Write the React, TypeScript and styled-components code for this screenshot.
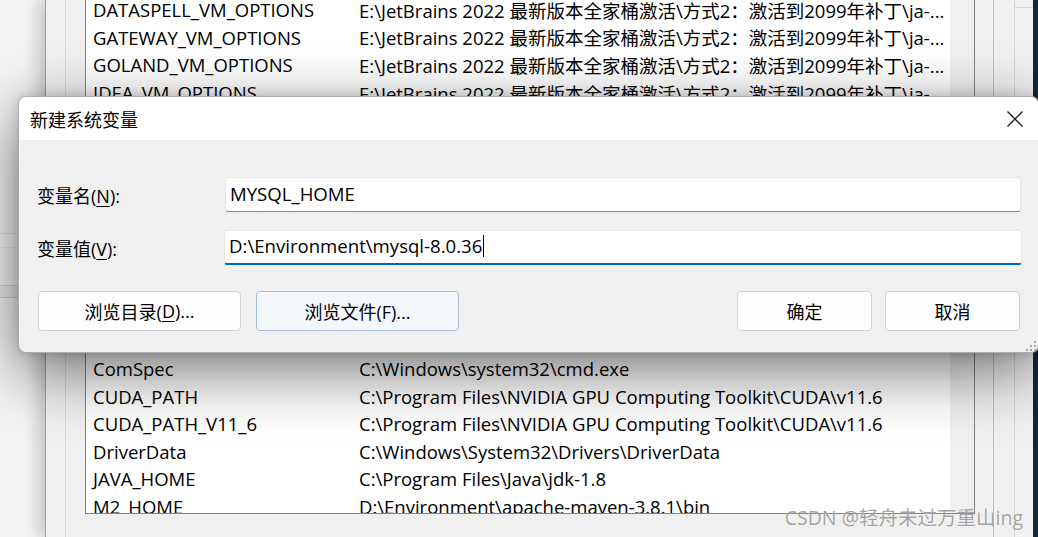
import React from 'react';
import styled, { createGlobalStyle } from 'styled-components';

const ROW_H = 27.6;

interface EnvVar {
  name: string;
  value: string;
}

const topRows: EnvVar[] = [
  { name: 'DATASPELL_VM_OPTIONS', value: 'E:\\JetBrains 2022 最新版本全家桶激活\\方式2：激活到2099年补丁\\ja-...' },
  { name: 'GATEWAY_VM_OPTIONS', value: 'E:\\JetBrains 2022 最新版本全家桶激活\\方式2：激活到2099年补丁\\ja-...' },
  { name: 'GOLAND_VM_OPTIONS', value: 'E:\\JetBrains 2022 最新版本全家桶激活\\方式2：激活到2099年补丁\\ja-...' },
  { name: 'IDEA_VM_OPTIONS', value: 'E:\\JetBrains 2022 最新版本全家桶激活\\方式2：激活到2099年补丁\\ja-...' },
];

const bottomRows: EnvVar[] = [
  { name: 'ComSpec', value: 'C:\\Windows\\system32\\cmd.exe' },
  { name: 'CUDA_PATH', value: 'C:\\Program Files\\NVIDIA GPU Computing Toolkit\\CUDA\\v11.6' },
  { name: 'CUDA_PATH_V11_6', value: 'C:\\Program Files\\NVIDIA GPU Computing Toolkit\\CUDA\\v11.6' },
  { name: 'DriverData', value: 'C:\\Windows\\System32\\Drivers\\DriverData' },
  { name: 'JAVA_HOME', value: 'C:\\Program Files\\Java\\jdk-1.8' },
  { name: 'M2_HOME', value: 'D:\\Environment\\apache-maven-3.8.1\\bin' },
];

const GlobalStyle = createGlobalStyle`
  html, body {
    margin: 0;
    padding: 0;
  }
  body {
    background: #f0f0f0;
    font-family: 'Open Sans', 'Noto Sans CJK SC', sans-serif;
    color: #000;
  }
  * {
    box-sizing: border-box;
  }
`;

const StdScreen = styled.div`
  position: relative;
  display: flex;
  width: 1038px;
  height: 537px;
  overflow: hidden;
  background: #f3f3f3;
`;

const StdBackStrip = styled.div`
  flex: 0 0 45px;
  padding-top: 233px;
`;

const StdBackPanel = styled.div`
  height: 65px;
  border-top: 1px solid #dedede;
  border-bottom: 1px solid #cdcdcd;
  background: linear-gradient(#f3f3f3 0 13px, #e4e4e4 13px 14px, #f3f3f3 14px 51px, #d4d4d4 51px 52px, #ebebeb 52px);
`;

const StdParentWindow = styled.div`
  position: relative;
  z-index: 1;
  flex: 0 0 988px;
  display: flex;
  border-left: 1px solid #9c9c9c;
  background: #f0f0f0;
  box-shadow: -6px 0 16px rgba(0, 0, 0, 0.2);
`;

const StdGroupEdge = styled.div`
  flex: 0 0 20px;
  border-right: 1px solid #d8d8d8;
`;

const StdListBox = styled.div`
  flex: 0 0 890px;
  display: flex;
  height: 519px;
  margin: -5px 0 0 19px;
  border: 1px solid #828282;
  background: #fff;
  overflow: hidden;
`;

const StdRows = styled.div`
  flex: 1;
  overflow: hidden;
`;

const StdScrollTrack = styled.div`
  flex: 0 0 24px;
  background: #f0f0f0;
`;

const StdRow = styled.div`
  display: grid;
  grid-template-columns: 266px auto;
  height: ${ROW_H}px;
  padding-left: 7px;
  align-items: center;
  font-size: 18.5px;
  white-space: nowrap;
  color: #000;
`;

const StdHiddenRows = styled.div<{ $count: number }>`
  height: ${(p) => p.$count * ROW_H}px;
`;

const StdRightEdge = styled.div`
  flex: 1;
  display: flex;
`;

const StdEdgeColumn = styled.div<{ $width: number; $line: string }>`
  flex: 0 0 ${(p) => p.$width}px;
  border-right: 1px solid ${(p) => p.$line};
`;

const StdEdgeTail = styled.div`
  flex: 1;
  margin-top: 7px;
  border-top: 1px solid #d6d6d6;
`;

const StdDesktop = styled.div`
  flex: 0 0 5px;
  background: #16283c;
`;

const StdDialog = styled.div`
  position: absolute;
  z-index: 5;
  left: 18px;
  top: 96px;
  width: 1021px;
  height: 257px;
  display: flex;
  flex-direction: column;
  border: 1px solid rgba(0, 0, 0, 0.28);
  border-radius: 8px;
  overflow: hidden;
  background: #f0f0f0;
  box-shadow: 0 18px 64px rgba(0, 0, 0, 0.55), 0 0 12px rgba(0, 0, 0, 0.16);
`;

const StdTitleBar = styled.div`
  flex: 0 0 43px;
  display: flex;
  align-items: center;
  justify-content: space-between;
  padding-left: 11px;
  background: #fff;
  font-size: 18px;
`;

const StdCloseButton = styled.div`
  width: 46px;
  height: 43px;
  display: flex;
  align-items: center;
  justify-content: center;
`;

const StdBody = styled.div`
  flex: 1;
  display: flex;
  flex-direction: column;
  gap: 18px;
  padding: 37px 17px 0 18px;
`;

const StdField = styled.div`
  display: grid;
  grid-template-columns: 188px 1fr;
  align-items: center;
`;

const StdLabel = styled.span`
  font-size: 18px;
`;

const StdMnemonic = styled.span`
  text-decoration: underline;
  text-underline-offset: 3px;
  text-decoration-thickness: 1px;
`;

const StdInput = styled.div<{ $focused?: boolean }>`
  display: flex;
  align-items: center;
  height: 35px;
  margin: 0 ${(p) => (p.$focused ? '-1px' : '0')};
  padding: 0 0 3px 4px;
  background: #fff;
  border: 1px solid #e6e6e6;
  border-bottom: ${(p) => (p.$focused ? '2px solid #0067c0' : '1px solid #868686')};
  border-radius: 3px;
  font-size: 18.6px;
  white-space: nowrap;
`;

const StdCaret = styled.span`
  display: inline-block;
  width: 1px;
  height: 22px;
  margin-left: 1px;
  background: #000;
`;

const StdButtonRow = styled.div`
  display: flex;
  justify-content: space-between;
  margin-top: 8px;
  padding: 0 1px;
`;

const StdButtonGroup = styled.div<{ $gap: number }>`
  display: flex;
  gap: ${(p) => p.$gap}px;
`;

const StdButton = styled.div<{ $width: number; $hovered?: boolean }>`
  display: flex;
  align-items: center;
  justify-content: center;
  width: ${(p) => p.$width}px;
  height: 40px;
  border: 1px solid ${(p) => (p.$hovered ? '#a6bfd8' : '#d2d2d2')};
  border-radius: 4px;
  background: ${(p) => (p.$hovered ? '#f4f7fb' : '#fdfdfd')};
  font-size: 18px;
`;

const StdResizeGrip = styled.svg`
  position: absolute;
  right: 2px;
  bottom: 1px;
`;

const StdWatermark = styled.div`
  position: absolute;
  z-index: 10;
  right: 15px;
  bottom: 6px;
  font-size: 19.5px;
  color: rgba(130, 130, 130, 0.72);
  text-shadow: 0 0 1px rgba(255, 255, 255, 0.7);
  white-space: nowrap;
`;

const CloseIcon: React.FC = () => (
  <svg width="16" height="16" viewBox="0 0 16 16">
    <path d="M0.5 0.5 L15.5 15.5 M15.5 0.5 L0.5 15.5" stroke="#1b1b1b" strokeWidth="1.3" fill="none" />
  </svg>
);

const EnvRow: React.FC<EnvVar> = ({ name, value }) => (
  <StdRow>
    <span>{name}</span>
    <span>{value}</span>
  </StdRow>
);

const App: React.FC = () => {
  return (
    <>
      <GlobalStyle />
      <StdScreen>
        <StdBackStrip>
          <StdBackPanel />
        </StdBackStrip>

        <StdParentWindow>
          <StdGroupEdge />
          <StdListBox>
            <StdRows>
              {topRows.map((row, i) => (
                <EnvRow key={`t${i}`} {...row} />
              ))}
              <StdHiddenRows $count={9} />
              {bottomRows.map((row) => (
                <EnvRow key={row.name} {...row} />
              ))}
            </StdRows>
            <StdScrollTrack />
          </StdListBox>
          <StdRightEdge>
            <StdEdgeColumn $width={19} $line="#bdbdbd" />
            <StdEdgeColumn $width={21} $line="#d6d6d6" />
            <StdEdgeTail />
          </StdRightEdge>
        </StdParentWindow>

        <StdDesktop />

        <StdDialog>
          <StdTitleBar>
            <span>新建系统变量</span>
            <StdCloseButton>
              <CloseIcon />
            </StdCloseButton>
          </StdTitleBar>
          <StdBody>
            <StdField>
              <StdLabel>
                变量名(<StdMnemonic>N</StdMnemonic>):
              </StdLabel>
              <StdInput>MYSQL_HOME</StdInput>
            </StdField>
            <StdField>
              <StdLabel>
                变量值(<StdMnemonic>V</StdMnemonic>):
              </StdLabel>
              <StdInput $focused>
                D:\Environment\mysql-8.0.36
                <StdCaret />
              </StdInput>
            </StdField>
            <StdButtonRow>
              <StdButtonGroup $gap={15}>
                <StdButton $width={203}>
                  浏览目录(<StdMnemonic>D</StdMnemonic>)...
                </StdButton>
                <StdButton $width={203} $hovered>
                  浏览文件(F)...
                </StdButton>
              </StdButtonGroup>
              <StdButtonGroup $gap={13}>
                <StdButton $width={135}>确定</StdButton>
                <StdButton $width={135}>取消</StdButton>
              </StdButtonGroup>
            </StdButtonRow>
          </StdBody>
          <StdResizeGrip width="10" height="10" viewBox="0 0 10 10">
            <g fill="#a8a8a8">
              <rect x="8" y="0" width="2" height="2" />
              <rect x="4" y="4" width="2" height="2" />
              <rect x="8" y="4" width="2" height="2" />
              <rect x="0" y="8" width="2" height="2" />
              <rect x="4" y="8" width="2" height="2" />
              <rect x="8" y="8" width="2" height="2" />
            </g>
          </StdResizeGrip>
        </StdDialog>

        <StdWatermark>CSDN @轻舟未过万重山ing</StdWatermark>
      </StdScreen>
    </>
  );
};

export default App;
